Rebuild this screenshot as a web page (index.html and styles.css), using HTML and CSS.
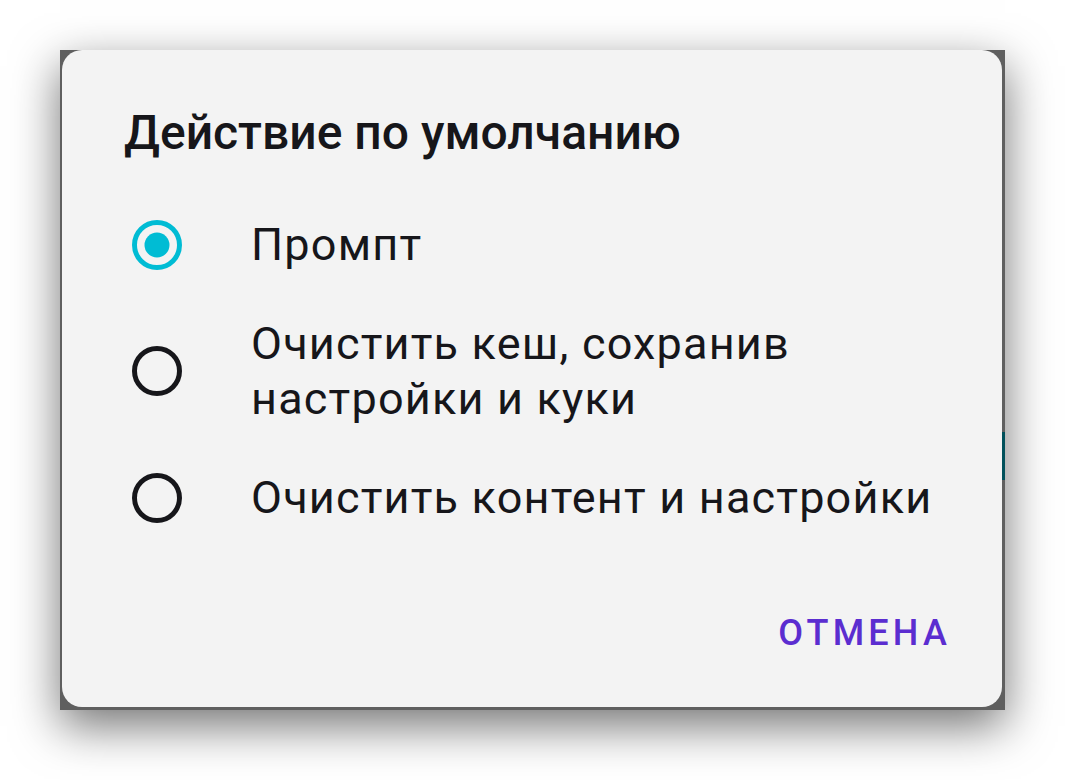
FILE: index.html
```html
<!DOCTYPE html>
<html lang="ru">
<head>
<meta charset="utf-8">
<title>Действие по умолчанию</title>
<link rel="stylesheet" href="styles.css">
</head>
<body>
<div class="frame">
  <div class="dialog">
    <h1 class="title">Действие по умолчанию</h1>
    <ul class="options">
      <li class="option">
        <svg class="radio" viewBox="0 0 50 50" width="50" height="50"><circle cx="25" cy="25" r="22.5" fill="none" stroke="#00bcd4" stroke-width="5"/><circle cx="25" cy="25" r="12.5" fill="#00bcd4"/></svg>
        <span class="label">Промпт</span>
      </li>
      <li class="option">
        <svg class="radio" viewBox="0 0 50 50" width="50" height="50"><circle cx="25" cy="25" r="22.5" fill="none" stroke="#16161a" stroke-width="5"/></svg>
        <span class="label">Очистить кеш, сохранив<br>настройки и куки</span>
      </li>
      <li class="option">
        <svg class="radio" viewBox="0 0 50 50" width="50" height="50"><circle cx="25" cy="25" r="22.5" fill="none" stroke="#16161a" stroke-width="5"/></svg>
        <span class="label">Очистить контент и настройки</span>
      </li>
    </ul>
    <div class="actions">
      <button class="btn" type="button">Отмена</button>
    </div>
  </div>
</div>
</body>
</html>
```

FILE: styles.css
```css
html, body {
  margin: 0;
  padding: 0;
  background: #ffffff;
}

body {
  width: 1065px;
  height: 780px;
  overflow: hidden;
  font-family: Roboto, "Noto Sans", sans-serif;
}

.frame {
  margin: 50px 0 0 60px;
  width: 945px;
  height: 660px;
  background:
    linear-gradient(#00505a, #00505a) no-repeat right 0 top 382px / 3px 48px,
    #5f5f5f;
  box-shadow: 0 16px 44px rgba(0, 0, 0, 0.55);
}

.dialog {
  margin-left: 2px;
  width: 940px;
  height: 657px;
  background: #f3f3f3;
  border-radius: 20px;
  display: flex;
  flex-direction: column;
  box-sizing: border-box;
  padding-top: 53px;
}

.title {
  margin: 0;
  padding-left: 62px;
  font-size: 48px;
  line-height: 60px;
  font-weight: 500;
  color: #16161a;
  letter-spacing: 0;
}

.options {
  list-style: none;
  margin: 32px 0 0 0;
  padding: 0;
}

.option {
  display: flex;
  align-items: center;
  min-height: 99px;
  padding-left: 70px;
}

.option:nth-child(2) {
  min-height: 154px;
}

.radio {
  flex: none;
  display: block;
}

.label {
  margin-left: 69px;
  font-size: 45px;
  line-height: 55px;
  color: #16161a;
  letter-spacing: 1.2px;
}

.actions {
  display: flex;
  justify-content: flex-end;
  margin-top: 41px;
  padding-right: 35px;
}

.btn {
  border: 0;
  background: transparent;
  font-family: Roboto, "Noto Sans", sans-serif;
  font-weight: 500;
  font-size: 36px;
  letter-spacing: 4.2px;
  text-transform: uppercase;
  color: #5b2dd0;
  height: 90px;
  padding: 0 16px;
}
```
